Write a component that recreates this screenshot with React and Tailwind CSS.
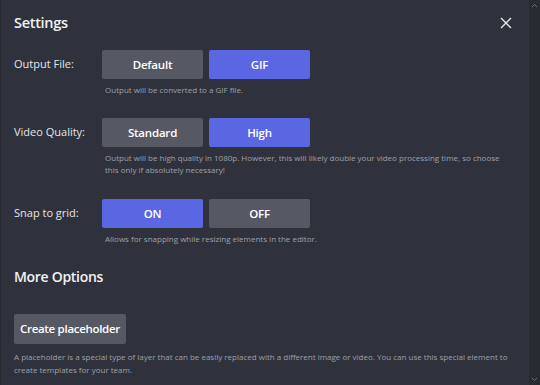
const font = { fontFamily: '"Open Sans", "Noto Sans", sans-serif' };

function Toggle({ options, active }) {
  return (
    <div className="flex gap-[6px]">
      {options.map((o) => (
        <button
          key={o}
          className={`w-[101px] h-[29px] rounded-[2px] text-[11.5px] tracking-[-0.2px] font-semibold text-white ${
            o === active ? "bg-[#5a66e2]" : "bg-[#565864]"
          }`}
        >
          {o}
        </button>
      ))}
    </div>
  );
}

function Row({ label, options, active, help, className = "" }) {
  return (
    <div className={`flex ${className}`}>
      <div className="w-[88px] h-[29px] flex items-center text-[11px] text-[#e4e5e8]">
        {label}
      </div>
      <div className="flex-1">
        <Toggle options={options} active={active} />
        <p className="pl-[3px] mt-[5px] text-[8px] leading-[12px] text-[#9ea0a8]">
          {help}
        </p>
      </div>
    </div>
  );
}

export default function App() {
  return (
    <div className="w-[540px] h-[385px] flex bg-[#2f323d] overflow-hidden" style={font}>
      <div className="flex-1 border-l border-[#26282f] pl-[13px] pr-[14px] pt-[12px]">
        <div className="flex items-center justify-between h-[22px]">
          <h2 className="text-[14.5px] tracking-[-0.3px] font-semibold text-[#f1f2f4]">Settings</h2>
          <svg width="12" height="12" viewBox="0 0 12 12" className="mr-[3px]">
            <path d="M1 1L11 11M11 1L1 11" stroke="#e6e7ea" strokeWidth="1.4" />
          </svg>
        </div>
        <Row
          className="mt-[16px]"
          label="Output File:"
          options={["Default", "GIF"]}
          active="GIF"
          help="Output will be converted to a GIF file."
        />
        <Row
          className="mt-[22px]"
          label="Video Quality:"
          options={["Standard", "High"]}
          active="High"
          help="Output will be high quality in 1080p. However, this will likely double your video processing time, so choose this only if absolutely necessary!"
        />
        <Row
          className="mt-[23px]"
          label="Snap to grid:"
          options={["ON", "OFF"]}
          active="ON"
          help="Allows for snapping while resizing elements in the editor."
        />
        <h3 className="mt-[22px] text-[14px] tracking-[-0.3px] font-semibold text-[#f1f2f4] leading-[20px]">
          More Options
        </h3>
        <button className="mt-[27px] h-[30px] px-[6px] rounded-[2px] bg-[#565864] text-[11.5px] tracking-[-0.3px] font-semibold text-white">
          Create placeholder
        </button>
        <p className="mt-[6px] text-[8px] leading-[13px] text-[#9ea0a8]">
          A placeholder is a special type of layer that can be easily replaced with a different image or video. You can use this special element to create templates for your team.
        </p>
      </div>
      <div className="w-[11px] bg-[#292b33] flex flex-col justify-between items-center py-[3px]">
        <svg width="7" height="5" viewBox="0 0 7 5">
          <path d="M1 4L3.5 1.5L6 4" stroke="#6b6e78" strokeWidth="1" fill="none" />
        </svg>
        <svg width="7" height="5" viewBox="0 0 7 5">
          <path d="M1 1L3.5 3.5L6 1" stroke="#6b6e78" strokeWidth="1" fill="none" />
        </svg>
      </div>
    </div>
  );
}
